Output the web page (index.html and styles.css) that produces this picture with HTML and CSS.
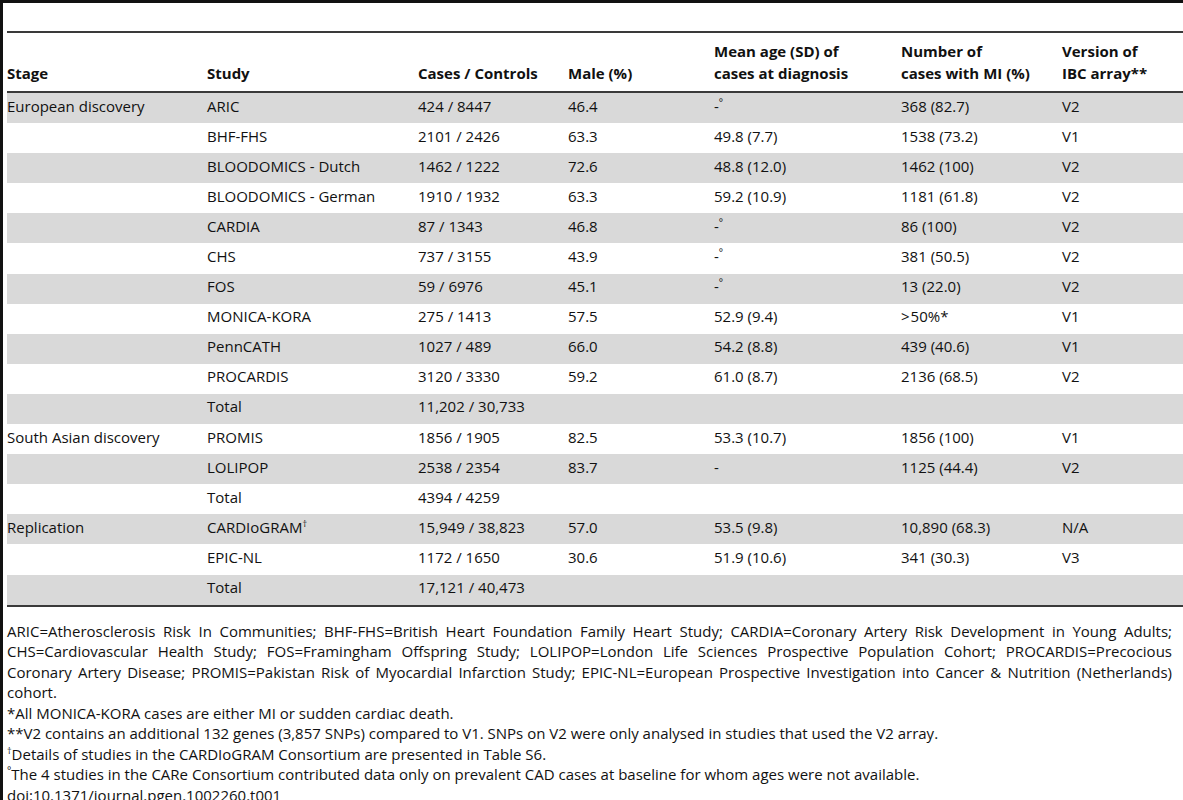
FILE: index.html
```html
<!DOCTYPE html>
<html>
<head>
  <meta charset="UTF-8" />
  <title>Table 1</title>
  <link rel="stylesheet" href="styles.css">
</head>
<body>
  <div class="sheet">
    <div class="caption"></div>
    <table class="data">
      <colgroup>
        <col class="c-stage"><col class="c-study"><col class="c-cases"><col class="c-male">
        <col class="c-age"><col class="c-mi"><col class="c-ver">
      </colgroup>
      <thead>
        <tr>
          <th>Stage</th>
          <th>Study</th>
          <th>Cases / Controls</th>
          <th>Male (%)</th>
          <th>Mean age (SD) of<br>cases at diagnosis</th>
          <th>Number of<br>cases with MI (%)</th>
          <th>Version of<br>IBC array**</th>
        </tr>
      </thead>
      <tbody>
        <tr class="shade"><td>European discovery</td><td>ARIC</td><td>424 / 8447</td><td>46.4</td><td>-<sup class="deg">°</sup></td><td>368 (82.7)</td><td>V2</td></tr>
        <tr><td></td><td>BHF-FHS</td><td>2101 / 2426</td><td>63.3</td><td>49.8 (7.7)</td><td>1538 (73.2)</td><td>V1</td></tr>
        <tr class="shade"><td></td><td>BLOODOMICS - Dutch</td><td>1462 / 1222</td><td>72.6</td><td>48.8 (12.0)</td><td>1462 (100)</td><td>V2</td></tr>
        <tr><td></td><td>BLOODOMICS - German</td><td>1910 / 1932</td><td>63.3</td><td>59.2 (10.9)</td><td>1181 (61.8)</td><td>V2</td></tr>
        <tr class="shade"><td></td><td>CARDIA</td><td>87 / 1343</td><td>46.8</td><td>-<sup class="deg">°</sup></td><td>86 (100)</td><td>V2</td></tr>
        <tr><td></td><td>CHS</td><td>737 / 3155</td><td>43.9</td><td>-<sup class="deg">°</sup></td><td>381 (50.5)</td><td>V2</td></tr>
        <tr class="shade"><td></td><td>FOS</td><td>59 / 6976</td><td>45.1</td><td>-<sup class="deg">°</sup></td><td>13 (22.0)</td><td>V2</td></tr>
        <tr><td></td><td>MONICA-KORA</td><td>275 / 1413</td><td>57.5</td><td>52.9 (9.4)</td><td><span class="gt">&gt;</span>50%*</td><td>V1</td></tr>
        <tr class="shade"><td></td><td>PennCATH</td><td>1027 / 489</td><td>66.0</td><td>54.2 (8.8)</td><td>439 (40.6)</td><td>V1</td></tr>
        <tr><td></td><td>PROCARDIS</td><td>3120 / 3330</td><td>59.2</td><td>61.0 (8.7)</td><td>2136 (68.5)</td><td>V2</td></tr>
        <tr class="shade"><td></td><td>Total</td><td>11,202 / 30,733</td><td></td><td></td><td></td><td></td></tr>
        <tr><td>South Asian discovery</td><td>PROMIS</td><td>1856 / 1905</td><td>82.5</td><td>53.3 (10.7)</td><td>1856 (100)</td><td>V1</td></tr>
        <tr class="shade"><td></td><td>LOLIPOP</td><td>2538 / 2354</td><td>83.7</td><td>-</td><td>1125 (44.4)</td><td>V2</td></tr>
        <tr><td></td><td>Total</td><td>4394 / 4259</td><td></td><td></td><td></td><td></td></tr>
        <tr class="shade"><td>Replication</td><td>CARDIoGRAM<sup>†</sup></td><td>15,949 / 38,823</td><td>57.0</td><td>53.5 (9.8)</td><td>10,890 (68.3)</td><td>N/A</td></tr>
        <tr><td></td><td>EPIC-NL</td><td>1172 / 1650</td><td>30.6</td><td>51.9 (10.6)</td><td>341 (30.3)</td><td>V3</td></tr>
        <tr class="shade"><td></td><td>Total</td><td>17,121 / 40,473</td><td></td><td></td><td></td><td></td></tr>
      </tbody>
    </table>

    <div class="notes">
      <p class="abbr">ARIC=Atherosclerosis Risk In Communities; BHF-FHS=British Heart Foundation Family Heart Study; CARDIA=Coronary Artery Risk Development in Young Adults;<br>CHS=Cardiovascular Health Study; FOS=Framingham Offspring Study; LOLIPOP=London Life Sciences Prospective Population Cohort; PROCARDIS=Precocious<br>Coronary Artery Disease; PROMIS=Pakistan Risk of Myocardial Infarction Study; EPIC-NL=European Prospective Investigation into Cancer &amp; Nutrition (Netherlands)<br>cohort.</p>
      <p>*All MONICA-KORA cases are either MI or sudden cardiac death.</p>
      <p>**V2 contains an additional 132 genes (3,857 SNPs) compared to V1. SNPs on V2 were only analysed in studies that used the V2 array.</p>
      <p><sup>†</sup>Details of studies in the CARDIoGRAM Consortium are presented in Table S6.</p>
      <p><sup class="deg">°</sup>The 4 studies in the CARe Consortium contributed data only on prevalent CAD cases at baseline for whom ages were not available.</p>
      <p>doi:10.1371/journal.pgen.1002260.t001</p>
    </div>
  </div>
</body>
</html>
```

FILE: styles.css
```css
body {
  margin: 0;
  font-family: "Open Sans", "DejaVu Sans", sans-serif;
  font-size: 15px;
  color: #111;
  background: #fff;
}
.sheet {
  border-left: 3px solid #111;
  border-top: 3px solid #111;
  padding-left: 4px;
  min-height: 797px;
  box-sizing: border-box;
}
.caption {
  height: 28px;
  border-bottom: 2px solid #3a3a3a;
}
.data {
  width: 100%;
  border-collapse: collapse;
  table-layout: fixed;
}
.c-stage { width: 200px; }
.c-study { width: 211px; }
.c-cases { width: 150px; }
.c-male { width: 146px; }
.c-age { width: 187px; }
.c-mi { width: 161px; }
.c-ver { width: 121px; }
.data th {
  text-align: left;
  font-weight: 700;
  vertical-align: bottom;
  height: 51px;
  padding: 0 0 7px 0;
  line-height: 22px;
  border-bottom: 2px solid #3a3a3a;
}
.data td {
  height: 25.1px;
  padding: 0 0 5px 0;
  line-height: 20px;
  white-space: nowrap;
}
.data tr.shade td {
  background: #d9d9d9;
}
.data tbody tr:last-child td {
  border-bottom: 2px solid #3a3a3a;
}
sup {
  font-size: 9px;
  line-height: 0;
  vertical-align: 6px;
}
.deg {
  font-size: 10px;
}
.gt {
  padding-right: 1px;
}
.notes {
  padding: 14px 11px 0 0;
  line-height: 20.5px;
}
.notes p {
  margin: 0;
}
.notes p.abbr {
  text-align: justify;
  text-align-last: justify;
}
```
